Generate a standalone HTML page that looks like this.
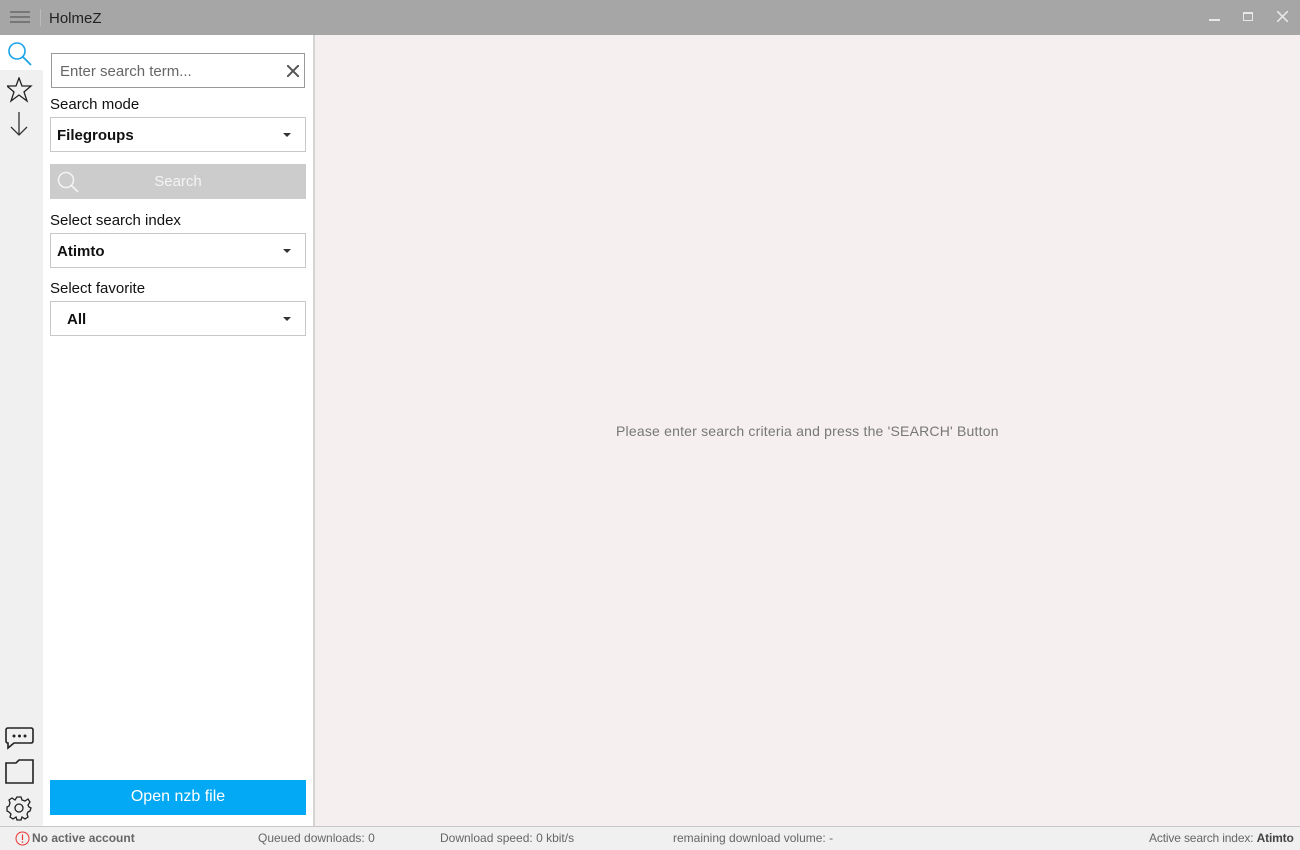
<!DOCTYPE html>
<html><head><meta charset="utf-8"><style>
*{margin:0;padding:0;box-sizing:border-box}
body{width:1300px;height:850px;overflow:hidden;font-family:"Liberation Sans",sans-serif;background:#f5efef;position:relative;color:#111}
.abs{position:absolute}
#title{left:0;top:0;width:1300px;height:35px;background:#a6a6a6}
#icons{left:0;top:35px;width:43px;height:791px;background:#f0f0f0}
#panel{left:43px;top:35px;height:791px;background:#fff;border-right:2px solid #d4d4d4;width:272px}
.lbl{font-size:15px;color:#111}
.box{position:absolute;left:50px;width:256px;height:35px;border:1px solid #c8c8c8;background:#fff;font-size:15px;font-weight:bold;padding:9px 0 0 6px}
.arr{position:absolute;right:14px;top:15px;width:0;height:0;border-left:4px solid transparent;border-right:4px solid transparent;border-top:4px solid #333}
#status{left:0;top:826px;width:1300px;height:24px;background:#f0f0f0;border-top:1px solid #c8c8c8;font-size:12px;color:#666}
#status span{position:absolute;top:4px}
</style></head><body>
<div id="title" class="abs">
<svg class="abs" style="left:10px;top:10px" width="20" height="14"><g stroke="#777" stroke-width="2"><line x1="0" y1="2" x2="20" y2="2"/><line x1="0" y1="7" x2="20" y2="7"/><line x1="0" y1="12" x2="20" y2="12"/></g></svg>
<div class="abs" style="left:40px;top:9px;width:1px;height:17px;background:#bbb"></div>
<div class="abs" style="left:49px;top:10px;font-size:15px;color:#222">HolmeZ</div>
<div class="abs" style="left:1209px;top:19px;width:11px;height:2px;background:#e8e8e8"></div>
<div class="abs" style="left:1243px;top:12px;width:10px;height:9px;border:1px solid #e8e8e8;border-top-width:2px"></div>
<svg class="abs" style="left:1277px;top:11px" width="11" height="11"><g stroke="#e8e8e8" stroke-width="1.6"><line x1="0" y1="0" x2="11" y2="11"/><line x1="11" y1="0" x2="0" y2="11"/></g></svg>
</div>
<div id="icons" class="abs">
<div class="abs" style="left:0;top:0;width:43px;height:35px;background:#fff"></div>
<svg class="abs" style="left:7px;top:6px" width="26" height="26"><circle cx="10" cy="10" r="8" fill="none" stroke="#1aa3e8" stroke-width="1.6"/><line x1="16" y1="16" x2="24" y2="24" stroke="#1aa3e8" stroke-width="1.8"/></svg>
<svg class="abs" style="left:7px;top:42px" width="26" height="26"><polygon points="12,1 15,9 24,9 17,15 20,24 12,18 4,24 7,15 0,9 9,9" fill="none" stroke="#222" stroke-width="1.3"/></svg>
<svg class="abs" style="left:10px;top:76px" width="18" height="26"><g stroke="#333" stroke-width="1.3" fill="none"><line x1="9" y1="1" x2="9" y2="24"/><polyline points="1,16 9,24 17,16"/></g></svg>
<svg class="abs" style="left:4px;top:690px" width="30" height="26"><path d="M4 3 H27 Q29 3 29 5 V16 Q29 18 27 18 H10 L4 23 V18 Q2 18 2 16 V5 Q2 3 4 3Z" fill="none" stroke="#222" stroke-width="1.6"/><g fill="#222"><circle cx="10" cy="11" r="1.5"/><circle cx="15.5" cy="11" r="1.5"/><circle cx="21" cy="11" r="1.5"/></g></svg>
<svg class="abs" style="left:4px;top:724px" width="30" height="26"><path d="M2 4 H12 L15 1 H29 V24 H2 Z" fill="none" stroke="#222" stroke-width="1.6"/></svg>
<svg class="abs" style="left:6px;top:760px" width="26" height="26"><circle cx="13" cy="13" r="4" fill="none" stroke="#222" stroke-width="1.3"/><path d="M11 2 H15 L16 5 L19 6 L22 4 L24 7 L22 10 L23 12 L25 13 L24 16 L22 17 L21 19 L22 22 L19 24 L16 22 L15 25 H11 L10 22 L7 24 L4 22 L5 19 L3 17 L1 16 V12 L3 11 L4 8 L3 5 L6 3 L9 5 Z" fill="none" stroke="#222" stroke-width="1.3"/></svg>
</div>
<div id="panel" class="abs"></div>
<div class="box" style="top:53px;left:51px;width:254px;height:35px;border-color:#999;font-weight:normal;color:#666;padding-left:8px">Enter search term...
<svg class="abs" style="left:235px;top:11px" width="12" height="12"><g stroke="#555" stroke-width="2"><line x1="0" y1="0" x2="12" y2="12"/><line x1="12" y1="0" x2="0" y2="12"/></g></svg></div>
<div class="abs lbl" style="left:50px;top:96px">Search mode</div>
<div class="box" style="top:117px">Filegroups<div class="arr"></div></div>
<div class="abs" style="left:50px;top:164px;width:256px;height:35px;background:#cccccc;color:#f4f4f4;font-size:15px;text-align:center;padding-top:9px">Search
<svg class="abs" style="left:7px;top:7px" width="22" height="22"><circle cx="9" cy="9" r="7.5" fill="none" stroke="#f4f4f4" stroke-width="1.5"/><line x1="14.5" y1="14.5" x2="21" y2="21" stroke="#f4f4f4" stroke-width="1.6"/></svg></div>
<div class="abs lbl" style="left:50px;top:212px">Select search index</div>
<div class="box" style="top:233px">Atimto<div class="arr"></div></div>
<div class="abs lbl" style="left:50px;top:280px">Select favorite</div>
<div class="box" style="top:301px;padding-left:16px">All<div class="arr"></div></div>
<div class="abs" style="left:50px;top:780px;width:256px;height:35px;background:#03a9f4;color:#fff;font-size:16px;text-align:center;padding-top:8px">Open nzb file</div>
<div class="abs" style="left:616px;top:423px;font-size:14px;color:#777;letter-spacing:0.2px">Please enter search criteria and press the 'SEARCH' Button</div>
<div id="status" class="abs">
<svg class="abs" style="left:15px;top:4px" width="15" height="15"><circle cx="7.5" cy="7.5" r="6.5" fill="none" stroke="#e33" stroke-width="1"/><line x1="7.5" y1="3.5" x2="7.5" y2="9" stroke="#e33" stroke-width="1.2"/><circle cx="7.5" cy="11" r=".8" fill="#e33"/></svg>
<span style="left:32px;font-weight:bold;color:#666">No active account</span>
<span style="left:258px">Queued downloads: 0</span>
<span style="left:440px">Download speed: 0 kbit/s</span>
<span style="left:673px">remaining download volume: -</span>
<span style="left:1149px;letter-spacing:-0.15px">Active search index: <b style="color:#444">Atimto</b></span>
</div>
</body></html>
